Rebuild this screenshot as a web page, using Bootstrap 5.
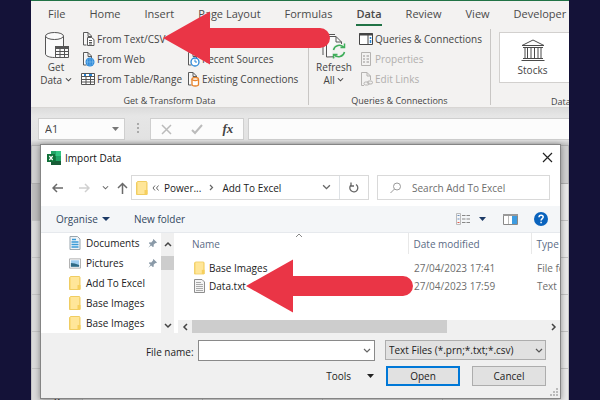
<!DOCTYPE html>
<html lang="en">
<head>
<meta charset="utf-8">
<meta name="viewport" content="width=device-width, initial-scale=1">
<title>Import Data</title>
<link href="https://cdn.jsdelivr.net/npm/bootstrap@5.3.0/dist/css/bootstrap.min.css" rel="stylesheet">
<style>
body { background: #141238; font-family: "Open Sans", "Noto Sans", sans-serif; font-size: 11px; line-height: 16px; color: #444; }
button, input, select { font: inherit; color: inherit; }
button { border: 0; background: none; padding: 0; }
svg { display: block; flex: none; }
.stage { height: 100vh; padding: 0 31px; overflow: hidden; }
.excel { height: 100%; background: #f3f2f1; border-top: 1px solid #217346; overflow: hidden; }
.tabs { height: 27px; padding: 5px 0 0 17px; gap: 24px; white-space: nowrap; }
.tabs a { color: #4a4a4a; text-decoration: none; height: 20px; }
.tabs a.current { font-weight: 600; border-bottom: 2px solid #217346; }
.ribbon { height: 80px; white-space: nowrap; border-bottom: 1px solid #d8d6d4; font-size: 10px; }
.group { border-right: 1px solid #c8c6c4; margin-top: 1px; height: 76px; }
.group-get { flex: 0 0 278px; }
.group-query { flex: 0 0 182px; }
.group-title { font-size: 9px; line-height: 14px; text-align: center; }
.tools { height: 60px; margin-bottom: 5px; }
.big-btn { width: 50px; line-height: 13px; }
.big-btn svg { margin: 0 auto 2px; }
.cmds { display: flex; flex-direction: column; }
.cmds button { display: flex; align-items: center; gap: 2px; height: 20px; text-align: left; }
.cmds button:disabled { color: #b1afad; }
.stocks { width: 90px; height: 51px; background: #fff; border: 1px solid #d2d0ce; border-right: 0; }
.formula { height: 37px; padding: 10px 0 5px 7px; background: linear-gradient(#dcdcdc, #e6e6e6 8px, #e2e2e2 32px, #c4c4c4); }
.formula .box { background: #fcfcfc; border: 1px solid #cfcfcf; height: 22px; }
.name-box { width: 87px; }
.name-box input { border: 0; background: none; width: 100%; min-width: 0; padding: 0 6px; outline: 0; }
.fx-box { width: 94px; }
.fx-label { font-family: "Liberation Serif", serif; font-style: italic; font-size: 13px; font-weight: 700; }
.sheet { width: 100%; table-layout: fixed; border-collapse: collapse; background: #e9e9e9; }
.sheet td, .sheet th { border: 1px solid #c4c4c4; height: 37px; padding: 0; font-weight: 400; text-align: center; vertical-align: bottom; color: #222; }
.sheet thead th { background: #d0d0d0; height: 38px; border-color: #b0b0b0; }
.sheet tbody th { background: #dadada; }
.sheet .sel { background: #bdbdbd; }
.sheet .num-col { width: 51px; }
.sheet .data-col { width: 120px; }
.dialog-win { top: 143px; left: 9px; right: 8px; background: #fff; border: 1px solid #858585; box-shadow: 0 1px 6px rgba(0,0,0,.4); color: #222; font-size: 10px; overflow: hidden; }
.title-bar { height: 30px; padding: 0 7px 5px 6px; gap: 3px; }
.title-bar h1 { font-size: 10px; line-height: 16px; margin: 0; font-weight: 400; color: #111; }
.nav-row { height: 25px; margin-bottom: 6px; padding-right: 10px; }
.field { border: 1px solid #d9d9d9; height: 25px; background: #fff; }
.arrows { width: 90px; padding-left: 11px; }
.search { flex: 0 0 173px; padding-left: 12px; gap: 11px; }
.search input { border: 0; outline: 0; width: 130px; padding: 0; }
.search input::placeholder { color: #6d6d6d; opacity: 1; }
.bar { height: 27px; background: #f4f6f8; border-bottom: 1px solid #e6e9ed; padding: 0 12px 0 15px; color: #33475f; }
.side { width: 133px; flex: none; height: 100px; overflow: hidden; }
.side ul { list-style: none; margin: 0; padding: 0 0 0 28px; flex: 1; min-width: 0; }
.side a { display: flex; align-items: center; gap: 5px; height: 20px; color: #222; text-decoration: none; white-space: nowrap; }
.vscroll { width: 13px; background: #f0f0f0; }
.vthumb { width: 13px; height: 14px; background: #cdcdcd; }
.files { width: 100%; table-layout: fixed; white-space: nowrap; }
.files .date-col { width: 123px; }
.files .type-col { width: 29px; }
.files th { font-weight: 400; color: #5b6b85; height: 21px; padding: 0 0 0 5px; border-left: 1px solid #e8e8e8; }
.files th:first-child { border: 0; padding-left: 14px; position: relative; }
.files th .sort { position: absolute; top: 0; left: 117px; }
.files td { height: 18px; padding: 0 0 0 6px; color: #6d6d6d; overflow: hidden; }
.files td:first-child { padding-left: 16px; color: #222; }
.files tbody tr:first-child td { height: 23px; padding-top: 5px; }
.hscroll { height: 13px; background: #f0f0f0; padding: 0 3px 0 4px; }
.hthumb { width: 68%; height: 13px; background: #cdcdcd; }
.foot { background: #f0f0f0; padding: 7px 14px 10px 0; height: 65px; }
.name-label { flex: 0 0 31%; }
.combo { border: 1px solid #8a8a8a; background: #fff; height: 21px; padding-right: 3px; }
.combo input { border: 0; outline: 0; flex: 1; min-width: 0; background: none; }
.type { appearance: none; width: 100%; height: 20px; border: 1px solid #adadad; border-radius: 0; padding: 0 3px; background: #e1e1e1; }
.type-wrap { flex: 0 0 161px; margin-left: 10px; }
.type-wrap svg { position: absolute; right: 3px; top: 8px; pointer-events: none; }
.actions { gap: 12px; margin-top: 5px; }
.push { width: 74px; height: 20px; background: #e1e1e1; border: 1px solid #adadad; }
.push.main { border: 2px solid #0078d7; }
.grip { position: absolute; right: 2px; bottom: 2px; }
.pointer { position: absolute; z-index: 5; }
.pointer-a { left: 132px; top: 10px; }
.pointer-b { left: 215px; top: 258px; }
</style>
<script src="https://cdn.jsdelivr.net/npm/bootstrap@5.3.0/dist/js/bootstrap.bundle.min.js"></script>
</head>
<body>
<svg width="0" height="0" class="position-absolute" aria-hidden="true">
  <symbol id="page" viewBox="0 0 14 16"><path d="M2.5 1.5h4.500l3.500 3.500v3M2.500 1.500v12.500h3M7 1.500v4h3.500" fill="#fafafa" stroke="#5a5a5a"/></symbol>
  <symbol id="folder" viewBox="0 0 12 14"><path d="M.5 1.500l1-1h9l.5 1v12H.500z" fill="#fbdc7c" stroke="#f0cd62"/><path d="M2 1h8v12H2z" fill="#ffe699"/><path d="M8.500 9h3v4.500h-3z" fill="#f6cf5c"/></symbol>
  <symbol id="chev" viewBox="0 0 8 6"><path d="M1 1l3 3 3-3" fill="none" stroke="currentColor" stroke-width="1.200"/></symbol>
  <symbol id="pin" viewBox="0 0 10 10"><path d="M6 0l4 4-1.200.6-.6-.2-2 2 .3 2-1.200.6L3.500 7.200.300 9.700 2.800 6.500 1 4.700l.6-1.200 2 .3 2-2-.2-.6z" fill="#8a9aa8"/></symbol>
  <symbol id="arrow" viewBox="0 0 168 54"><path d="M0 27L47 .500V17H157a10 10 0 0 1 0 20H47V53.500z" fill="#ea3546"/></symbol>
</svg>
<main class="stage">
<div class="excel position-relative">
  <nav class="tabs d-flex" aria-label="Ribbon tabs">
    <a href="#">File</a><a href="#">Home</a><a href="#">Insert</a><a href="#">Page Layout</a><a href="#">Formulas</a><a href="#" class="current">Data</a><a href="#">Review</a><a href="#">View</a><a href="#">Developer</a>
  </nav>
  <section class="ribbon d-flex">
    <div class="group group-get">
      <div class="tools d-flex">
        <button type="button" class="big-btn">
          <svg width="28" height="28" viewBox="0 0 28 28" fill="#fafafa" stroke="#555"><path d="M3.500 5v18c0 2 4 3.500 9 3.500s9-1.500 9-3.500V5"/><ellipse cx="12.500" cy="5" rx="9" ry="3.500"/><path d="M13.500 15.500h13v11h-13z"/><path d="M13 15h14v3H13z" fill="#555" stroke="none"/><path d="M13.500 20.500h13M13.500 23.500h13M18 16v10.500M22.500 16v10.500" fill="none"/></svg>
          Get<br>Data <svg class="d-inline" width="7" height="6"><use href="#chev"/></svg>
        </button>
        <div class="cmds">
          <button type="button"><svg width="14" height="16" viewBox="0 0 14 16"><use href="#page"/><path d="M6.500 6.500h4l2.500 2v6H6.500z" fill="#fff" stroke="#5a5a5a"/><path d="M8 9.500h3M8 11.500h3M8 13h3" stroke="#5a5a5a"/></svg>From Text/CSV</button>
          <button type="button"><svg width="14" height="16" viewBox="0 0 14 16"><use href="#page"/><circle cx="9" cy="11" r="4.500" fill="#2b88d8"/><path d="M9 6.500v9M4.500 11h9M7 7.500q-1.500 3.500 0 7M11 7.500q1.500 3.500 0 7" fill="none" stroke="#8cc4ee" stroke-width=".6"/></svg>From Web</button>
          <button type="button"><svg width="14" height="14" viewBox="0 0 14 14"><path d="M.5 1.500h13v11H.500z" fill="#fff" stroke="#555"/><path d="M.500 4.500h13M.500 7.500h13M.500 10h13M5 4.500v8M9.500 4.500v8" stroke="#555" fill="none"/><path d="M3 3h2M8 3h3" stroke="#2b88d8" stroke-width="2"/></svg>From Table/Range</button>
        </div>
        <div class="cmds justify-content-end ms-1">
          <button type="button"><svg width="14" height="16" viewBox="0 0 14 16"><use href="#page"/><circle cx="9" cy="11" r="4" fill="#fff" stroke="#2b88d8" stroke-width="1.300"/><path d="M9 8.500V11h2" fill="none" stroke="#2b88d8"/></svg>Recent Sources</button>
          <button type="button"><svg width="14" height="16" viewBox="0 0 14 16"><use href="#page"/><path d="M6 8v5.500c0 2 6.500 2 6.500 0V8" fill="#fff" stroke="#e8832a" stroke-width="1.300"/><ellipse cx="9.200" cy="8" rx="3.200" ry="1.500" fill="#fff" stroke="#e8832a" stroke-width="1.300"/></svg>Existing Connections</button>
        </div>
      </div>
      <div class="group-title">Get &amp; Transform Data</div>
    </div>
    <div class="group group-query">
      <div class="tools d-flex">
        <button type="button" class="big-btn">
          <svg width="28" height="28" viewBox="0 0 28 28" fill="#fafafa" stroke="#555"><path d="M3 24V3.500h12"/><path d="M6.500 26V5.500h9.500l5.500 5.500v14.500z"/><path d="M16 5.500V11h5.500" fill="none"/><circle cx="19" cy="20" r="7.500" fill="#f3f2f1" stroke="none"/><path d="M13.500 19a6 6 0 0 1 10.500-2.500M24.500 21a6 6 0 0 1-10.500 2.500M24.500 12.500v4h-4M13.500 27.500v-4h4" fill="none" stroke="#3fae5a" stroke-width="1.500"/></svg>
          Refresh<br>All <svg class="d-inline" width="7" height="6"><use href="#chev"/></svg>
        </button>
        <div class="cmds">
          <button type="button"><svg width="14" height="14" viewBox="0 0 14 14"><path d="M.5 1.500h13v11H.500z" fill="#fff" stroke="#444"/><path d="M0 2.500h14" stroke="#444" stroke-width="2"/><path d="M9 3v9" stroke="#444"/><path d="M11.500 5v2M11.500 8v3" stroke="#2b88d8" stroke-width="1.500"/></svg>Queries &amp; Connections</button>
          <button type="button" disabled><svg width="14" height="14" viewBox="0 0 14 14" fill="none" stroke="#b5b3b1"><path d="M2.500.500h9v13h-9z"/><path d="M4 4h2M7.500 4h2.500M4 7h2M7.500 7h2.500M4 10h2M7.500 10h2.500" stroke-width="1.500"/></svg>Properties</button>
          <button type="button" disabled><svg width="14" height="14" viewBox="0 0 14 14" fill="none" stroke="#b5b3b1"><path d="M5 13.500H2.500V.500H8L11.500 4v4M8 .500V4h3.500"/><rect x="5" y="10" width="5" height="3" rx="1.500"/><rect x="8.500" y="9" width="5" height="3" rx="1.500"/></svg>Edit Links</button>
        </div>
      </div>
      <div class="group-title">Queries &amp; Connections</div>
    </div>
    <div class="flex-grow-1 ps-2 pt-1 overflow-hidden">
      <button type="button" class="stocks d-block pe-4">
        <svg class="mx-auto" width="24" height="24" viewBox="0 0 24 24" fill="none" stroke="#4a4a4a"><path d="M1 7.500L12 2l11 5.500zM2 9.500h20M2 20.500h20M.5 22.500h23M4 10v10.500M6.500 10v10.500M10 10v10.500M13.500 10v10.500M17 10v10.500M20 10v10.500"/></svg>Stocks
      </button>
      <div class="group-title mt-2 text-start ps-5 ms-1 pt-1">Data Types</div>
    </div>
  </section>
  <div class="formula d-flex">
    <div class="box name-box d-flex align-items-center pe-1"><input value="A1" aria-label="Name box"><svg width="8" height="5"><path d="M0 0h7L3.500 4z" fill="#777"/></svg></div>
    <svg class="mx-2 mt-1" width="9" height="13" fill="#aaa"><path d="M4 1h2v2H4zM4 5h2v2H4zM4 9h2v2H4z"/></svg>
    <div class="box fx-box d-flex align-items-center justify-content-around">
      <button type="button" aria-label="Cancel entry"><svg width="11" height="11" fill="none" stroke="#bbb" stroke-width="1.500"><path d="M1 1l9 9M10 1l-9 9"/></svg></button>
      <button type="button" aria-label="Enter"><svg width="12" height="11" fill="none" stroke="#bbb" stroke-width="2"><path d="M1 6l3 3 7-8"/></svg></button>
      <button type="button" class="fx-label">fx</button>
    </div>
    <div class="box flex-grow-1 border-end-0 ms-1"></div>
  </div>
  <table class="sheet" aria-label="Worksheet">
    <colgroup><col class="num-col"><col class="data-col"><col class="data-col"><col class="data-col"><col></colgroup>
    <thead><tr><th></th><th></th><th></th><th></th><th></th></tr></thead>
    <tbody>
      <tr><th class="sel"></th><td></td><td></td><td></td><td></td></tr>
      <tr><th></th><td></td><td></td><td></td><td></td></tr>
      <tr><th></th><td></td><td></td><td></td><td></td></tr>
      <tr><th></th><td></td><td></td><td></td><td></td></tr>
      <tr><th></th><td></td><td></td><td></td><td></td></tr>
      <tr><th>6</th><td></td><td></td><td></td><td></td></tr>
    </tbody>
  </table>

  <section class="dialog-win position-absolute" role="dialog" aria-labelledby="dlg-title">
    <header class="title-bar d-flex align-items-center">
      <svg width="15" height="14" viewBox="0 0 15 14"><path d="M4 0h10v14H4z" fill="#21a366"/><path d="M9 0h5v5H9z" fill="#33c481"/><path d="M4 5h5v5H4z" fill="#107c41"/><path d="M4 10h10v4H4z" fill="#185c37"/><path d="M0 3h8v8H0z" fill="#0f7038"/><path d="M2.300 5l3.400 4M5.700 5L2.300 9" stroke="#fff" stroke-width="1.200"/></svg>
      <h1 id="dlg-title">Import Data</h1>
      <button type="button" class="ms-auto" aria-label="Close"><svg width="11" height="11" fill="none" stroke="#222" stroke-width="1.200"><path d="M1 1l9 9M10 1l-9 9"/></svg></button>
    </header>
    <div class="nav-row d-flex">
      <div class="arrows d-flex align-items-center">
        <button type="button" aria-label="Back"><svg width="11" height="10" fill="none" stroke="#6a6a6a" stroke-width="1.500"><path d="M5 1L1 5l4 4M1 5h10"/></svg></button>
        <button type="button" class="ms-3" aria-label="Forward"><svg width="11" height="10" fill="none" stroke="#d0d0d0" stroke-width="1.500"><path d="M6 1l4 4-4 4M10 5H0"/></svg></button>
        <button type="button" class="ms-2 ps-1" aria-label="Recent locations"><svg width="7" height="6" color="#666"><use href="#chev"/></svg></button>
        <button type="button" class="ms-2" aria-label="Up"><svg width="11" height="12" fill="none" stroke="#6a6a6a" stroke-width="1.500"><path d="M1 6l4.500-4.500L10 6M5.500 1.500V12"/></svg></button>
      </div>
      <div class="field d-flex align-items-center flex-grow-1 ps-1 text-nowrap">
        <svg width="12" height="14"><use href="#folder"/></svg>
        <svg class="ms-1 me-1" width="8" height="6" fill="none" stroke="#666"><path d="M3 .5L1 3l2 2.500M6.500.500L4.500 3l2 2.500"/></svg>
        <span>Power...</span>
        <svg class="mx-2" width="5" height="7" fill="none" stroke="#666" stroke-width="1.200"><path d="M1 1l2.500 2.500L1 6"/></svg>
        <span>Add To Excel</span>
        <svg class="ms-auto me-2" width="9" height="7" color="#666"><use href="#chev"/></svg>
        <button type="button" class="border-start h-100 px-2" aria-label="Refresh"><svg width="12" height="12" fill="none" stroke="#666" stroke-width="1.300"><path d="M8 2.500A4 4 0 1 1 3 3M3 .5V4h3"/></svg></button>
      </div>
      <div class="field search d-flex align-items-center ms-2">
        <svg width="11" height="12" fill="none" stroke="#999"><circle cx="7" cy="4.500" r="3.500"/><path d="M4.500 7L.5 11"/></svg>
        <input type="search" placeholder="Search Add To Excel" aria-label="Search Add To Excel">
      </div>
    </div>
    <div class="bar d-flex align-items-center">
      <button type="button" class="d-flex align-items-center">Organise <svg class="ms-1" width="8" height="5"><path d="M0 0h8L4 4z" fill="#1c3a66"/></svg></button>
      <button type="button" class="ms-4">New folder</button>
      <button type="button" class="ms-auto d-flex align-items-center" aria-label="View"><svg width="15" height="12" fill="none"><path d="M.5.500h4v11h-4z" stroke="#bbb"/><path d="M1.500 2.500h2M1.500 6h2" stroke="#6c8fbd"/><path d="M1.500 9.500h2" stroke="#e05a4a"/><path d="M6 2.500h3.500M10.500 2.500H14M6 6h3.500M10.500 6H14M6 9.500h3.500M10.500 9.500H14" stroke="#888"/></svg><svg class="ms-2" width="8" height="5"><path d="M0 0h7L3.500 4z" fill="#1c3a66"/></svg></button>
      <button type="button" class="ms-3" aria-label="Preview pane"><svg width="15" height="11"><path d="M.5.500h14v10H.500z" fill="#fff" stroke="#888"/><path d="M0 0h15v2H0z" fill="#999"/><path d="M9 2h5v8H9z" fill="#3d9be0"/><path d="M5.500 2v8" stroke="#bbb"/></svg></button>
      <button type="button" class="ms-3" aria-label="Help"><svg width="14" height="14"><circle cx="7" cy="7" r="7" fill="#0a63bd"/><path d="M5 5.300c0-3 4.200-2.600 4.200-.2C9.200 6.600 7.100 6.700 7.100 8.500M7.100 9.700v1.600" fill="none" stroke="#fff" stroke-width="1.500"/></svg></button>
    </div>
    <div class="d-flex">
      <div class="side d-flex">
        <ul>
          <li><a href="#"><svg width="12" height="14" viewBox="0 0 12 14"><path d="M1 .500h7.500L11 3v10.500H1z" fill="#eef3f7" stroke="#9aa6ae"/><path d="M3 3.500h4M2.500 6h7M2.500 8.500h7M2.500 11h7" stroke="#3a9bd8" stroke-width="1.300"/></svg>Documents<svg class="ms-auto me-1" width="9" height="9"><use href="#pin"/></svg></a></li>
          <li><a href="#"><svg width="12" height="11" viewBox="0 0 13 11"><path d="M.5.500h12v10H.500z" fill="#fff" stroke="#a8a8a8"/><path d="M2 2h9v7H2z" fill="#9fcdf0"/><path d="M2 5q4 0 9 2v2H2z" fill="#2f6a85"/></svg>Pictures<svg class="ms-auto me-1" width="9" height="9"><use href="#pin"/></svg></a></li>
          <li><a href="#"><svg width="12" height="14"><use href="#folder"/></svg>Add To Excel</a></li>
          <li><a href="#"><svg width="12" height="14"><use href="#folder"/></svg>Base Images</a></li>
          <li><a href="#"><svg width="12" height="14"><use href="#folder"/></svg>Base Images</a></li>
        </ul>
        <div class="vscroll d-flex flex-column align-items-center">
          <svg class="my-2" width="8" height="7" fill="none" stroke="#444" stroke-width="1.500"><path d="M1 5l3-3 3 3"/></svg>
          <div class="vthumb"></div>
          <svg class="mt-auto mb-1" width="8" height="6" fill="none" stroke="#444" stroke-width="1.500"><path d="M1 1l3 3 3-3"/></svg>
        </div>
      </div>
      <div class="flex-grow-1 d-flex flex-column overflow-hidden ps-1">
        <table class="files">
          <colgroup><col><col class="date-col"><col class="type-col"></colgroup>
          <thead><tr><th>Name<svg class="sort" width="8" height="5" fill="none" stroke="#888"><path d="M1 4l3-3 3 3"/></svg></th><th>Date modified</th><th>Type</th></tr></thead>
          <tbody>
            <tr><td><span class="d-flex align-items-center"><svg class="me-1" width="11" height="14"><use href="#folder"/></svg>Base Images</span></td><td>27/04/2023 17:41</td><td>File folder</td></tr>
            <tr><td><span class="d-flex align-items-center"><svg class="me-1" width="11" height="14" viewBox="0 0 11 14"><path d="M.5.500H8L10.500 3v10.500H.500z" fill="#f4f4f4" stroke="#8e8e8e"/><path d="M2 3.500h5M2 5.500h7M2 7.500h7M2 9.500h7M2 11.500h7" stroke="#aaa"/></svg>Data.txt</span></td><td>27/04/2023 17:59</td><td>Text Document</td></tr>
          </tbody>
        </table>
        <div class="hscroll mt-auto d-flex align-items-center">
          <svg class="me-1" width="6" height="8" fill="none" stroke="#444" stroke-width="1.500"><path d="M5 1L2 4l3 3"/></svg>
          <div class="hthumb"></div>
          <svg class="ms-auto" width="6" height="8" fill="none" stroke="#444" stroke-width="1.500"><path d="M1 1l3 3-3 3"/></svg>
        </div>
      </div>
    </div>
    <footer class="foot position-relative">
      <div class="d-flex">
        <label for="fname" class="text-end text-nowrap pe-1 pt-1 name-label">File name:</label>
        <div class="combo d-flex align-items-center flex-grow-1"><input id="fname" type="text"><svg width="8" height="6" color="#666"><use href="#chev"/></svg></div>
        <div class="type-wrap position-relative"><select class="type" aria-label="File type"><option>Text Files (*.prn;*.txt;*.csv)</option></select><svg width="8" height="6" color="#555"><use href="#chev"/></svg></div>
      </div>
      <div class="actions d-flex justify-content-end align-items-center">
        <button type="button" class="d-flex align-items-center">Tools <svg class="ms-3" width="7" height="5"><path d="M0 0h7L3.500 4z" fill="#222"/></svg></button>
        <button type="button" class="push main">Open</button>
        <button type="button" class="push">Cancel</button>
      </div>
      <svg class="grip" width="8" height="8" fill="#bbb"><path d="M6 0h2v2H6zM3 3h2v2H3zM6 3h2v2H6zM0 6h2v2H0zM3 6h2v2H3zM6 6h2v2H6z"/></svg>
    </footer>
  </section>
  <svg class="pointer pointer-a" width="168" height="54"><use href="#arrow"/></svg>
  <svg class="pointer pointer-b" width="168" height="54"><use href="#arrow"/></svg>
</div>
</main>
</body>
</html>
